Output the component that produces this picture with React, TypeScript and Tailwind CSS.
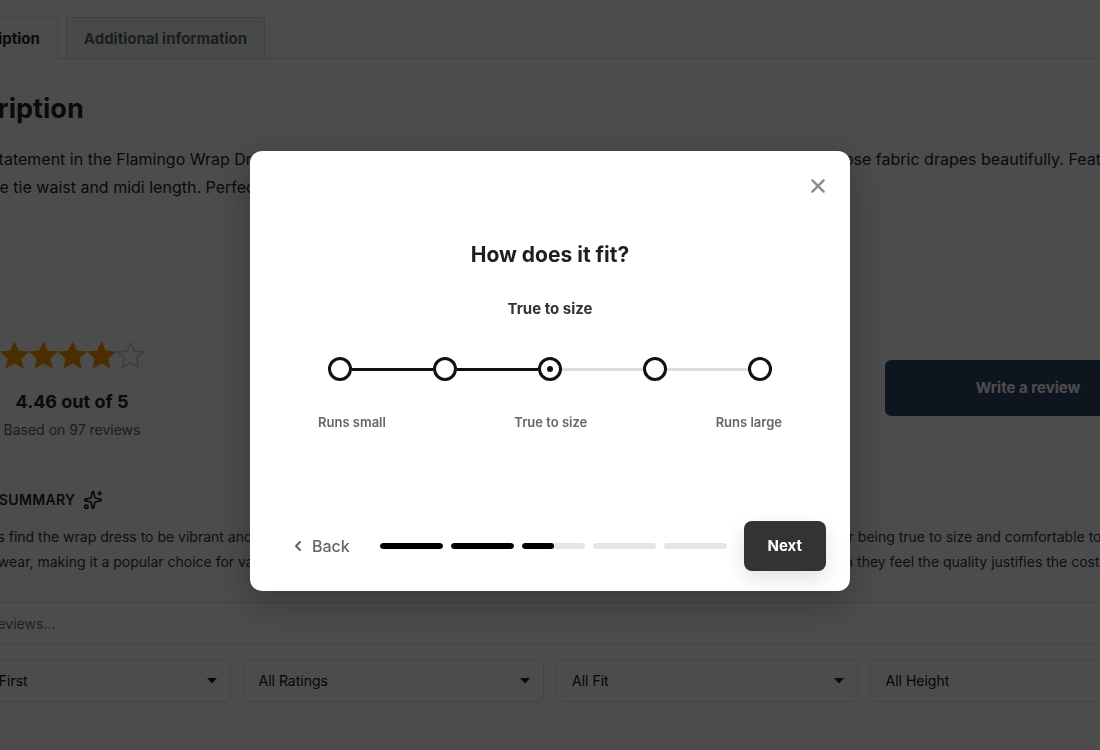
import { useState } from "react";

const fitOptions = ["Runs small", "Slightly small", "True to size", "Slightly large", "Runs large"];
const progress = [100, 100, 50, 0, 0];
const filters = [
  { label: "Sort reviews", value: "Newest First" },
  { label: "Filter by rating", value: "All Ratings" },
  { label: "Filter by fit", value: "All Fit" },
  { label: "Filter by height", value: "All Height" },
];

function Star({ filled }: { filled: boolean }) {
  return (
    <svg
      viewBox="0 0 24 24"
      className={filled ? "size-[29px] fill-[#ff9800] stroke-[#ff9800]" : "size-[29px] fill-none stroke-[#c8cacd]"}
      strokeWidth="1.2"
      aria-hidden="true"
    >
      <path d="M12 1.6l3.1 6.9 7.6.7-5.7 5.1 1.7 7.4L12 17.9l-6.7 3.8L7 14.3 1.3 9.2l7.6-.7z" />
    </svg>
  );
}

function Sparkles() {
  return (
    <svg
      viewBox="0 0 24 24"
      className="size-5 fill-none stroke-current"
      strokeWidth="2"
      strokeLinecap="round"
      strokeLinejoin="round"
      aria-hidden="true"
    >
      <path d="M11.017 2.814a1 1 0 0 1 1.966 0l1.051 5.558a2 2 0 0 0 1.594 1.594l5.558 1.051a1 1 0 0 1 0 1.966l-5.558 1.051a2 2 0 0 0-1.594 1.594l-1.051 5.558a1 1 0 0 1-1.966 0l-1.051-5.558a2 2 0 0 0-1.594-1.594l-5.558-1.051a1 1 0 0 1 0-1.966l5.558-1.051a2 2 0 0 0 1.594-1.594z" />
      <path d="M20 2v4M22 4h-4" />
      <circle cx="4" cy="20" r="2" />
    </svg>
  );
}

function ProductPage() {
  return (
    <main className="flex justify-center overflow-hidden pt-[17px] text-[#1f2430]">
      <div className="w-[1242px] shrink-0">
        <nav className="flex gap-2 border-b border-[#dde3e1] pl-2">
          <a href="#description" className="-mb-px rounded-t-xs border border-b-0 border-[#e4e8e7] bg-white px-[17px] pt-[9px] pb-[7px] text-[15px] leading-6 font-bold">
            Description
          </a>
          <a href="#additional" className="rounded-t-xs border border-b-0 border-[#cfdad7] bg-[#f2f8f6] px-[17px] pt-[9px] pb-[7px] text-[15px] leading-6 font-bold text-[#5b6170]">
            Additional information
          </a>
        </nav>

        <section className="pt-8 pl-[2px]">
          <h2 className="text-[27px] leading-9 font-bold">Description</h2>
          <p className="pt-[18px] text-base leading-7 whitespace-nowrap">
            Make a statement in the Flamingo Wrap Dress. Its bold, colourful tropical print brings effortless summer style while the loose fabric drapes beautifully. Featuring a
            <br />
            adjustable tie waist and midi length. Perfect for brunch dates and beach parties.
          </p>
        </section>

        <section className="flex items-start justify-between pt-[140px]">
          <div className="flex w-[286px] flex-col items-center">
            <div className="flex" role="img" aria-label="4.46 out of 5 stars">
              {[1, 2, 3, 4, 5].map((n) => (
                <Star key={n} filled={n < 5} />
              ))}
            </div>
            <p className="pt-[18px] text-lg leading-7 font-bold">4.46 out of 5</p>
            <p className="pt-[2px] text-sm leading-6 text-[#5b6170]">Based on 97 reviews</p>
          </div>
          <button type="button" className="mt-[19px] h-14 w-[286px] rounded-md bg-[#2e4668] text-[15px] font-bold text-white">
            Write a review
          </button>
        </section>

        <section className="pt-[46px]">
          <h3 className="flex items-center gap-2 text-sm leading-6 font-semibold tracking-wide">
            REVIEWS SUMMARY <Sparkles />
          </h3>
          <p className="pt-3 pl-1 text-sm leading-[25px] whitespace-nowrap text-[#333845]">
            Customers find the wrap dress to be vibrant and flattering, with many receiving compliments on it from friends and family. They praise it for being true to size and comfortable to
            <br />
            everyday wear, making it a popular choice for vacations and events. Others note that it costs a little more than similar dresses, though often they feel the quality justifies the cost.
          </p>
        </section>

        <form className="flex flex-col gap-[14px] pt-[28px]">
          <input
            type="search"
            aria-label="Search reviews"
            placeholder="Search reviews..."
            className="h-[43px] w-full rounded-md border border-[#dfe1e5] bg-white px-3 text-sm placeholder:text-[#6b7280]"
          />
          <div className="grid grid-cols-4 gap-3">
            {filters.map((f) => (
              <div key={f.value} className="relative">
                <select aria-label={f.label} className="h-[43px] w-full appearance-none rounded-md border border-[#dfe1e5] bg-white px-[15px] text-sm text-[#111111]">
                  <option>{f.value}</option>
                </select>
                <svg viewBox="0 0 10 6" className="pointer-events-none absolute top-[19px] right-[14px] h-[6px] w-[10px] fill-[#222222]" aria-hidden="true">
                  <path d="M0 0h10L5 5.5z" />
                </svg>
              </div>
            ))}
          </div>
        </form>
      </div>
    </main>
  );
}

function FitDialog() {
  const [fit, setFit] = useState(2);
  return (
    <div className="fixed inset-0 flex items-center justify-center bg-black/70 pb-2">
      <div
        role="dialog"
        aria-modal="true"
        aria-labelledby="fit-title"
        className="flex min-h-[440px] w-full max-w-[600px] flex-col rounded-xl bg-white shadow-[0_10px_40px_rgba(0,0,0,0.3)]"
      >
        <div className="flex justify-end pt-[23px] pr-[20px]">
          <button type="button" aria-label="Close" className="flex size-6 items-center justify-center text-[#8c8c8c]">
            <svg viewBox="0 0 14 14" className="size-[14px] fill-none stroke-current" strokeWidth="2.4" strokeLinecap="round" aria-hidden="true">
              <path d="M1.4 1.4l11.2 11.2M12.6 1.4L1.4 12.6" />
            </svg>
          </button>
        </div>

        <div className="flex flex-1 flex-col pt-[41px]">
          <h2 id="fit-title" className="text-center text-[21px] leading-8 font-bold text-[#1f1f1f]">
            How does it fit?
          </h2>
          <p className="pt-[26px] text-center text-[15px] leading-6 font-bold text-[#333333]">{fitOptions[fit]}</p>
          <fieldset aria-labelledby="fit-title" className="flex items-center px-[78px] pt-[36px]">
            {fitOptions.map((option, i) => (
              <div key={option} className={i === 0 ? "flex items-center" : "flex flex-1 items-center"}>
                {i > 0 && <span className={i <= fit ? "h-[3px] flex-1 bg-[#111111]" : "h-[3px] flex-1 bg-[#dcdcdc]"} />}
                <label className="flex">
                  <span className="sr-only">{option}</span>
                  <input
                    type="radio"
                    name="fit"
                    checked={fit === i}
                    onChange={() => setFit(i)}
                    className="flex size-6 appearance-none items-center justify-center rounded-full border-3 border-[#111111] bg-white before:size-[6px] before:rounded-full checked:before:bg-[#111111]"
                  />
                </label>
              </div>
            ))}
          </fieldset>
          <div className="flex justify-between px-[68px] pt-[31px] text-[13px] leading-5 font-semibold text-[#666666]">
            <span>Runs small</span>
            <span>True to size</span>
            <span>Runs large</span>
          </div>
        </div>

        <div className="flex items-center gap-4 pr-6 pb-5 pl-[43px]">
          <button type="button" className="flex items-center gap-[9px] pr-[14px] text-base leading-6 font-medium text-[#666666]">
            <svg viewBox="0 0 10 12" className="h-3 w-[10px] fill-none stroke-current" strokeWidth="2" strokeLinecap="round" strokeLinejoin="round" aria-hidden="true">
              <path d="M7 2L3 6l4 4" />
            </svg>
            Back
          </button>
          <div className="flex flex-1 gap-2" role="progressbar" aria-label="Review progress" aria-valuenow={50} aria-valuemin={0} aria-valuemax={100}>
            {progress.map((value, i) => (
              <div key={i} className="h-[6px] flex-1 overflow-hidden rounded-full bg-[#e5e5e5]">
                <div className="h-full rounded-full bg-black" style={{ width: `${value}%` }} />
              </div>
            ))}
          </div>
          <button type="button" className="h-[50px] rounded-lg bg-[#333333] px-6 text-[15px] font-bold text-white shadow-[0_8px_20px_rgba(0,0,0,0.12)]">
            Next
          </button>
        </div>
      </div>
    </div>
  );
}

export default function App() {
  return (
    <div className="min-h-screen bg-white font-['Inter','Liberation_Sans',sans-serif]">
      <ProductPage />
      <FitDialog />
    </div>
  );
}
